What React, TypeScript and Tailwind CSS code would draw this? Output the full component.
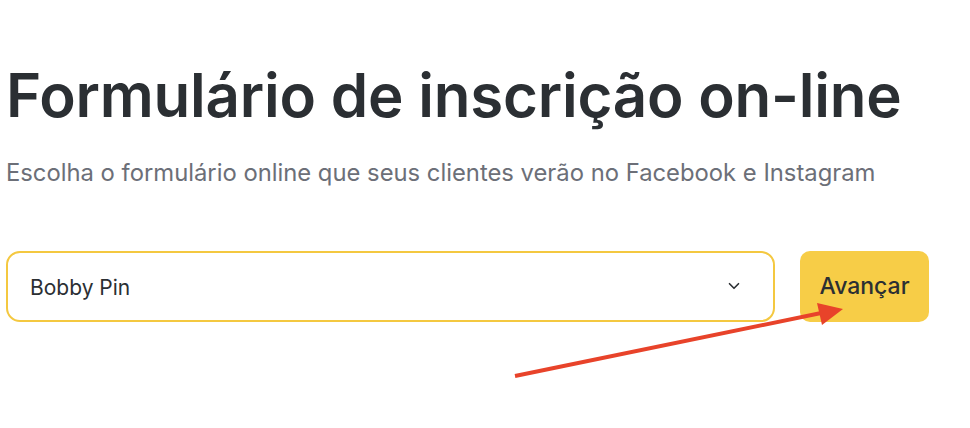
import { ChevronDown } from "lucide-react";

export default function App() {
  return (
    <div className="relative w-[970px] h-[428px] bg-white overflow-hidden font-['Inter',sans-serif]">
      <div className="pl-[6px] pr-[41px] pt-[65px]">
        <h1 className="text-[60px] leading-none font-semibold text-[#2b2f33] tracking-[-0.2px]">
          Formulário de inscrição on-line
        </h1>
        <p className="mt-[36px] text-[23.8px] leading-none text-[#6c6f78]">
          Escolha o formulário online que seus clientes verão no Facebook e Instagram
        </p>
        <div className="mt-[66px] flex items-stretch gap-[25px]">
          <div className="flex-1 h-[71px] flex items-center justify-between border-2 border-[#f4c840] rounded-[14px] pl-[22px] pr-[30px]">
            <span className="text-[21px] text-[#2b2f33] pt-[3px]">Bobby Pin</span>
            <ChevronDown className="w-[18px] h-[18px] text-[#2b2f33]" strokeWidth={2.2} />
          </div>
          <button className="w-[129px] h-[71px] rounded-[10px] bg-[#f7cd47] text-[23px] font-medium text-[#2b2f33]">
            Avançar
          </button>
        </div>
      </div>
      <svg className="absolute left-0 top-0" width="970" height="428" viewBox="0 0 970 428">
        <line x1="515" y1="376" x2="826" y2="312" stroke="#e8432a" strokeWidth="4" />
        <polygon points="843,309 817,303 822,325" fill="#e8432a" />
      </svg>
    </div>
  );
}
